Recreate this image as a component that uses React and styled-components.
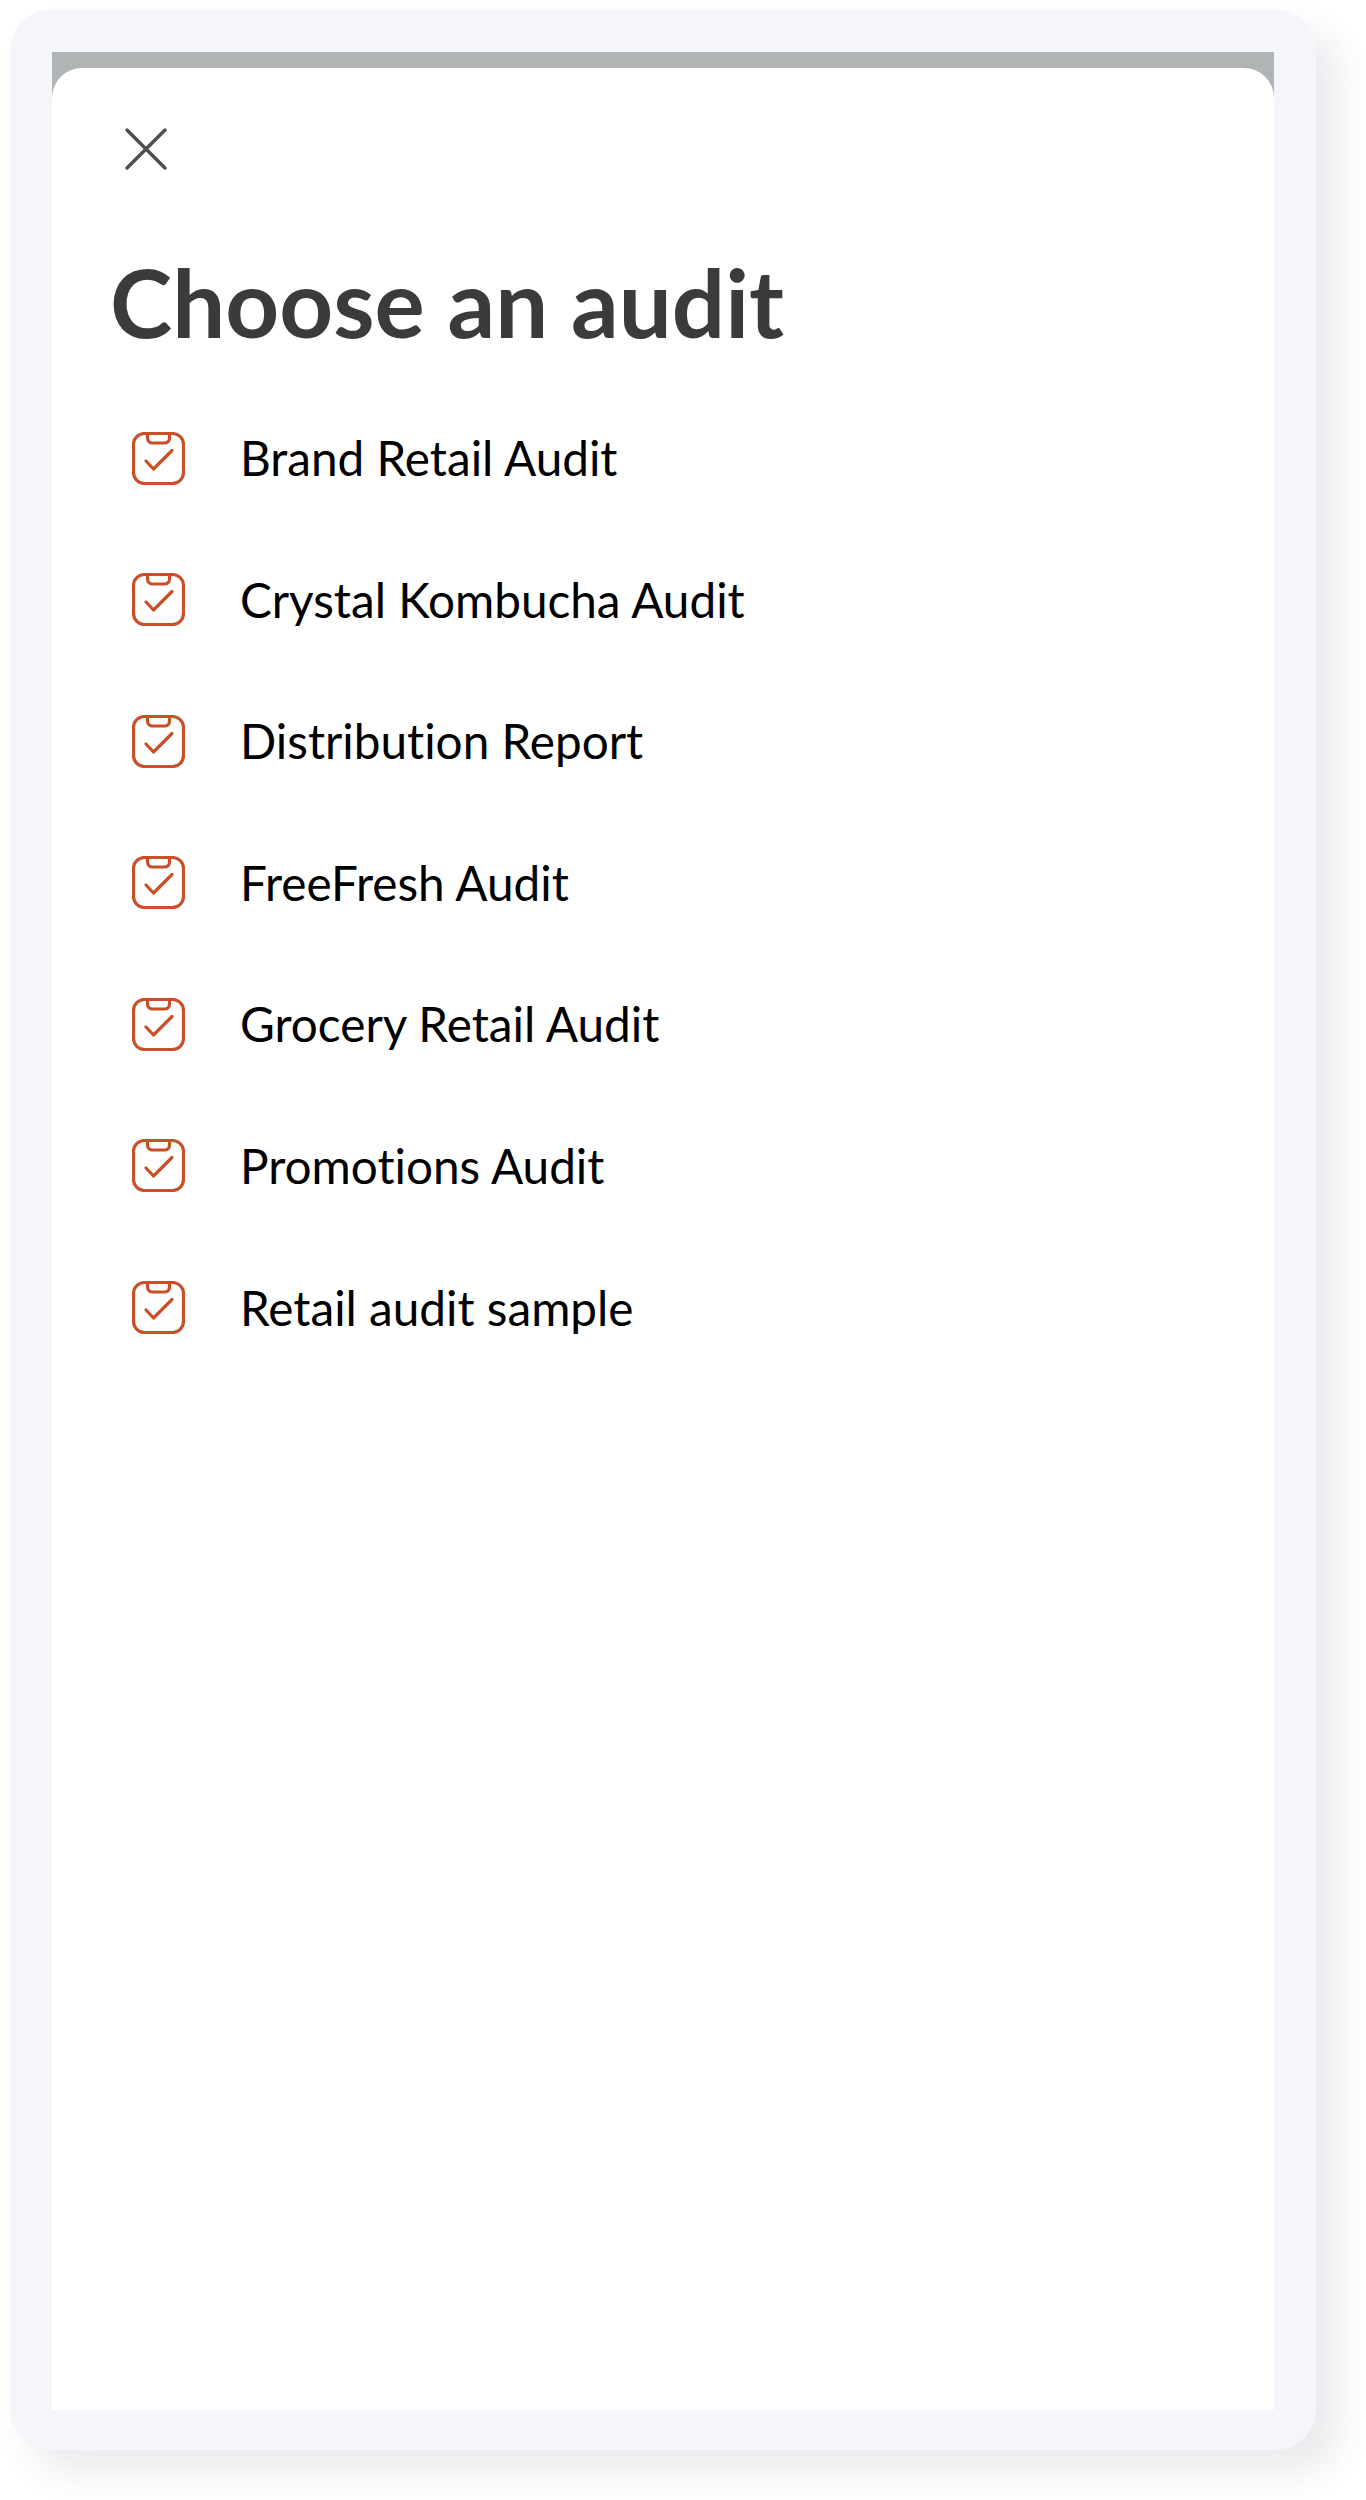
import React from "react";
import styled, { createGlobalStyle } from "styled-components";

const Global = createGlobalStyle`
  html, body { margin: 0; padding: 0; background: #fff; }
  * { box-sizing: border-box; }
`;

const Page = styled.div`
  width: 1366px;
  height: 2500px;
  padding: 10px 50px 50px 10px;
  font-family: Lato, "Open Sans", sans-serif;
  font-variant-ligatures: none;
  overflow: hidden;
`;

const Frame = styled.div`
  width: 1306px;
  height: 2440px;
  padding: 42px 42px 40px;
  background: #f5f6fc;
  border-radius: 40px;
  box-shadow: 22px 22px 36px rgba(60, 66, 90, 0.11);
  display: flex;
`;

const Screen = styled.div`
  flex: 1;
  padding-top: 16px;
  background: linear-gradient(#b0b4b5 0 60px, #fff 60px);
  display: flex;
`;

const Sheet = styled.div`
  flex: 1;
  background: #fff;
  border-radius: 30px 30px 0 0;
  padding: 59px 0 0 58px;
`;

const CloseButton = styled.button`
  display: block;
  width: 44px;
  height: 44px;
  margin: 0 0 0 14px;
  padding: 0;
  border: 0;
  background: none;
  color: #4d4d4d;
`;

const Title = styled.h1`
  margin: 71px 0 0;
  font-size: 94px;
  line-height: 120px;
  font-weight: 700;
  color: #3b3b3b;
`;

const List = styled.ul`
  list-style: none;
  margin: 56px 0 0 22px;
  padding: 0;
  display: flex;
  flex-direction: column;
  gap: 61.6px;
`;

const Row = styled.li`
  display: flex;
  align-items: center;
  gap: 55px;
  height: 80px;
`;

const Name = styled.span`
  font-size: 47.7px;
  line-height: 80px;
  color: #000;
`;

const CloseIcon = () => (
  <svg width="44" height="44" viewBox="0 0 44 44" fill="none" stroke="currentColor" strokeWidth="3.4" strokeLinecap="round">
    <path d="M3 3 L41 41 M41 3 L3 41" />
  </svg>
);

const AuditIcon = () => (
  <svg width="53" height="53" viewBox="0 0 53 53" fill="none" stroke="#c84f27" strokeWidth="3.2" strokeLinecap="round" strokeLinejoin="round">
    <rect x="1.5" y="1.5" width="50" height="50" rx="11" />
    <path d="M15.5 2 V6 a5 5 0 0 0 5 5 H32.5 a5 5 0 0 0 5 -5 V2" />
    <path d="M14 29 L21.5 37 L40 18.5" />
  </svg>
);

const audits = [
  "Brand Retail Audit",
  "Crystal Kombucha Audit",
  "Distribution Report",
  "FreeFresh Audit",
  "Grocery Retail Audit",
  "Promotions Audit",
  "Retail audit sample",
];

export default function App() {
  return (
    <Page>
      <Global />
      <Frame>
        <Screen>
          <Sheet>
            <CloseButton aria-label="Close">
              <CloseIcon />
            </CloseButton>
            <Title>Choose an audit</Title>
            <List>
              {audits.map((a) => (
                <Row key={a}>
                  <AuditIcon />
                  <Name>{a}</Name>
                </Row>
              ))}
            </List>
          </Sheet>
        </Screen>
      </Frame>
    </Page>
  );
}
